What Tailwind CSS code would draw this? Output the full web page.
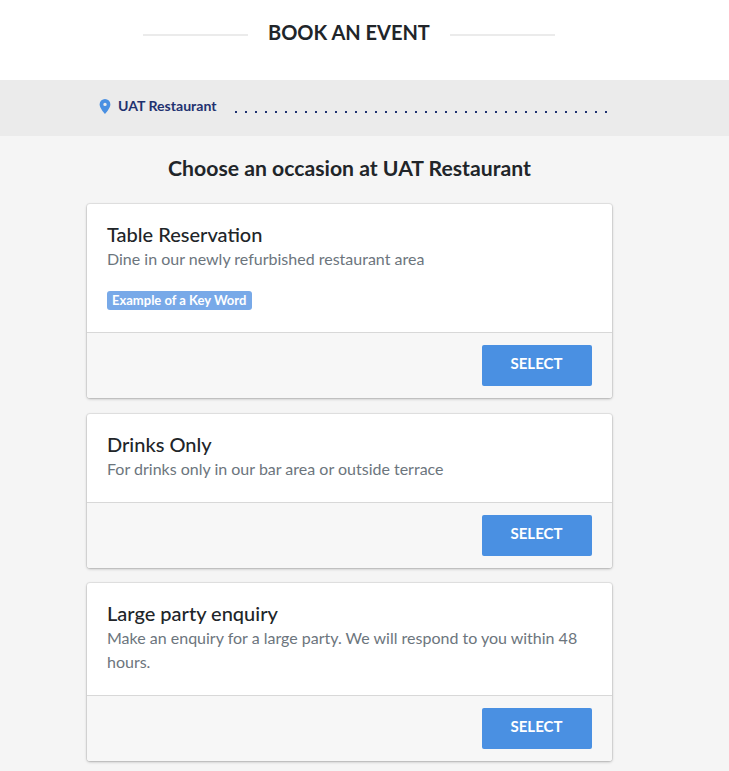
<!DOCTYPE html>
<html lang="en">
<head>
    <meta charset="UTF-8">
    <title>Book an event</title>
    <script src="https://cdn.jsdelivr.net/npm/@tailwindcss/browser@4"></script>
</head>
<body class="bg-[#f5f5f5] font-['Lato',sans-serif] overflow-hidden h-[771px]">
    <!-- Header -->
    <header class="bg-white h-[80px] pr-[31px] pt-[18px] flex justify-center items-start gap-5">
        <div class="w-[105px] h-0.5 bg-[#ebebeb] mt-[16px]"></div>
        <h1 class="text-[20px] leading-[28px] font-bold text-[#212529] w-[162px] whitespace-nowrap">BOOK AN EVENT</h1>
        <div class="w-[105px] h-0.5 bg-[#ebebeb] mt-[16px]"></div>
    </header>

    <!-- Location bar -->
    <div class="bg-[#ebebeb] h-[56px] flex items-start pl-[99px] pt-[19px]">
        <svg class="w-3 h-[15px]" viewBox="0 0 12 15" fill="#4a90e2"><path fill-rule="evenodd" d="M6 0a5.400 5.400 0 0 0-5.400 5.400C.6 9 6 15 6 15s5.400-6 5.400-9.600A5.400 5.400 0 0 0 6 0Zm0 7.100a1.700 1.700 0 1 1 0-3.400 1.700 1.700 0 0 1 0 3.400Z"/></svg>
        <span class="ml-[7px] text-[14.1px] leading-[22px] -mt-[4px] font-bold text-[#1f3270] w-[117px] whitespace-nowrap">UAT Restaurant</span>
        <div class="mt-[12px] flex gap-2">
            <i class="w-0.5 h-0.5 bg-[#1f3270]"></i><i class="w-0.5 h-0.5 bg-[#1f3270]"></i><i class="w-0.5 h-0.5 bg-[#1f3270]"></i><i class="w-0.5 h-0.5 bg-[#1f3270]"></i><i class="w-0.5 h-0.5 bg-[#1f3270]"></i><i class="w-0.5 h-0.5 bg-[#1f3270]"></i><i class="w-0.5 h-0.5 bg-[#1f3270]"></i><i class="w-0.5 h-0.5 bg-[#1f3270]"></i><i class="w-0.5 h-0.5 bg-[#1f3270]"></i><i class="w-0.5 h-0.5 bg-[#1f3270]"></i><i class="w-0.5 h-0.5 bg-[#1f3270]"></i><i class="w-0.5 h-0.5 bg-[#1f3270]"></i><i class="w-0.5 h-0.5 bg-[#1f3270]"></i><i class="w-0.5 h-0.5 bg-[#1f3270]"></i><i class="w-0.5 h-0.5 bg-[#1f3270]"></i><i class="w-0.5 h-0.5 bg-[#1f3270]"></i><i class="w-0.5 h-0.5 bg-[#1f3270]"></i><i class="w-0.5 h-0.5 bg-[#1f3270]"></i><i class="w-0.5 h-0.5 bg-[#1f3270]"></i><i class="w-0.5 h-0.5 bg-[#1f3270]"></i><i class="w-0.5 h-0.5 bg-[#1f3270]"></i><i class="w-0.5 h-0.5 bg-[#1f3270]"></i><i class="w-0.5 h-0.5 bg-[#1f3270]"></i><i class="w-0.5 h-0.5 bg-[#1f3270]"></i><i class="w-0.5 h-0.5 bg-[#1f3270]"></i><i class="w-0.5 h-0.5 bg-[#1f3270]"></i><i class="w-0.5 h-0.5 bg-[#1f3270]"></i><i class="w-0.5 h-0.5 bg-[#1f3270]"></i><i class="w-0.5 h-0.5 bg-[#1f3270]"></i><i class="w-0.5 h-0.5 bg-[#1f3270]"></i><i class="w-0.5 h-0.5 bg-[#1f3270]"></i><i class="w-0.5 h-0.5 bg-[#1f3270]"></i><i class="w-0.5 h-0.5 bg-[#1f3270]"></i><i class="w-0.5 h-0.5 bg-[#1f3270]"></i><i class="w-0.5 h-0.5 bg-[#1f3270]"></i><i class="w-0.5 h-0.5 bg-[#1f3270]"></i><i class="w-0.5 h-0.5 bg-[#1f3270]"></i><i class="w-0.5 h-0.5 bg-[#1f3270]"></i>
        </div>
    </div>

    <!-- Occasions -->
    <main class="w-[525px] ml-[87px]">
        <h2 class="text-[21.2px] leading-[28px] font-bold text-[#212529] text-center pt-[18px] pb-[22px] whitespace-nowrap">Choose an occasion at UAT Restaurant</h2>

        <section class="bg-white rounded-[3px] shadow-[0_0_0_1px_rgba(0,0,0,0.06),0_1px_3px_rgba(0,0,0,0.25)] mb-4">
            <div class="px-5 pt-[17px] h-[128px]">
                <h3 class="text-[20px] leading-[26px] font-medium text-[#212529]">Table Reservation</h3>
                <p class="text-[16px] leading-[24px] text-[#6c757d]">Dine in our newly refurbished restaurant area</p>
                <span class="block w-fit mt-[20px] bg-[#78a9e8] text-white text-[13px] leading-[19px] font-bold pl-[5px] pr-[5.5px] rounded-[3px]">Example of a Key Word</span>
            </div>
            <div class="bg-[#f7f7f7] border-t border-[#d8d8d8] h-[66px] flex justify-end items-start pt-3 pr-5 rounded-b-[3px]">
                <button class="w-[110px] h-[41px] pb-[5px] pr-px bg-[#4a90e2] text-white text-[15px] font-bold rounded-[2px]">SELECT</button>
            </div>
        </section>

        <section class="bg-white rounded-[3px] shadow-[0_0_0_1px_rgba(0,0,0,0.06),0_1px_3px_rgba(0,0,0,0.25)] mb-[15px]">
            <div class="px-5 pt-[17px] h-[88px]">
                <h3 class="text-[20px] leading-[26px] font-medium text-[#212529]">Drinks Only</h3>
                <p class="text-[16px] leading-[24px] text-[#6c757d]">For drinks only in our bar area or outside terrace</p>
            </div>
            <div class="bg-[#f7f7f7] border-t border-[#d8d8d8] h-[66px] flex justify-end items-start pt-3 pr-5 rounded-b-[3px]">
                <button class="w-[110px] h-[41px] pb-[5px] pr-px bg-[#4a90e2] text-white text-[15px] font-bold rounded-[2px]">SELECT</button>
            </div>
        </section>

        <section class="bg-white rounded-[3px] shadow-[0_0_0_1px_rgba(0,0,0,0.06),0_1px_3px_rgba(0,0,0,0.25)]">
            <div class="px-5 pt-[17px] h-[112px]">
                <h3 class="text-[20px] leading-[26px] font-medium text-[#212529]">Large party enquiry</h3>
                <p class="text-[16px] leading-[24px] text-[#6c757d]">Make an enquiry for a large party. We will respond to you within 48 hours.</p>
            </div>
            <div class="bg-[#f7f7f7] border-t border-[#d8d8d8] h-[66px] flex justify-end items-start pt-3 pr-5 rounded-b-[3px]">
                <button class="w-[110px] h-[41px] pb-[5px] pr-px bg-[#4a90e2] text-white text-[15px] font-bold rounded-[2px]">SELECT</button>
            </div>
        </section>
    </main>
</body>
</html>
